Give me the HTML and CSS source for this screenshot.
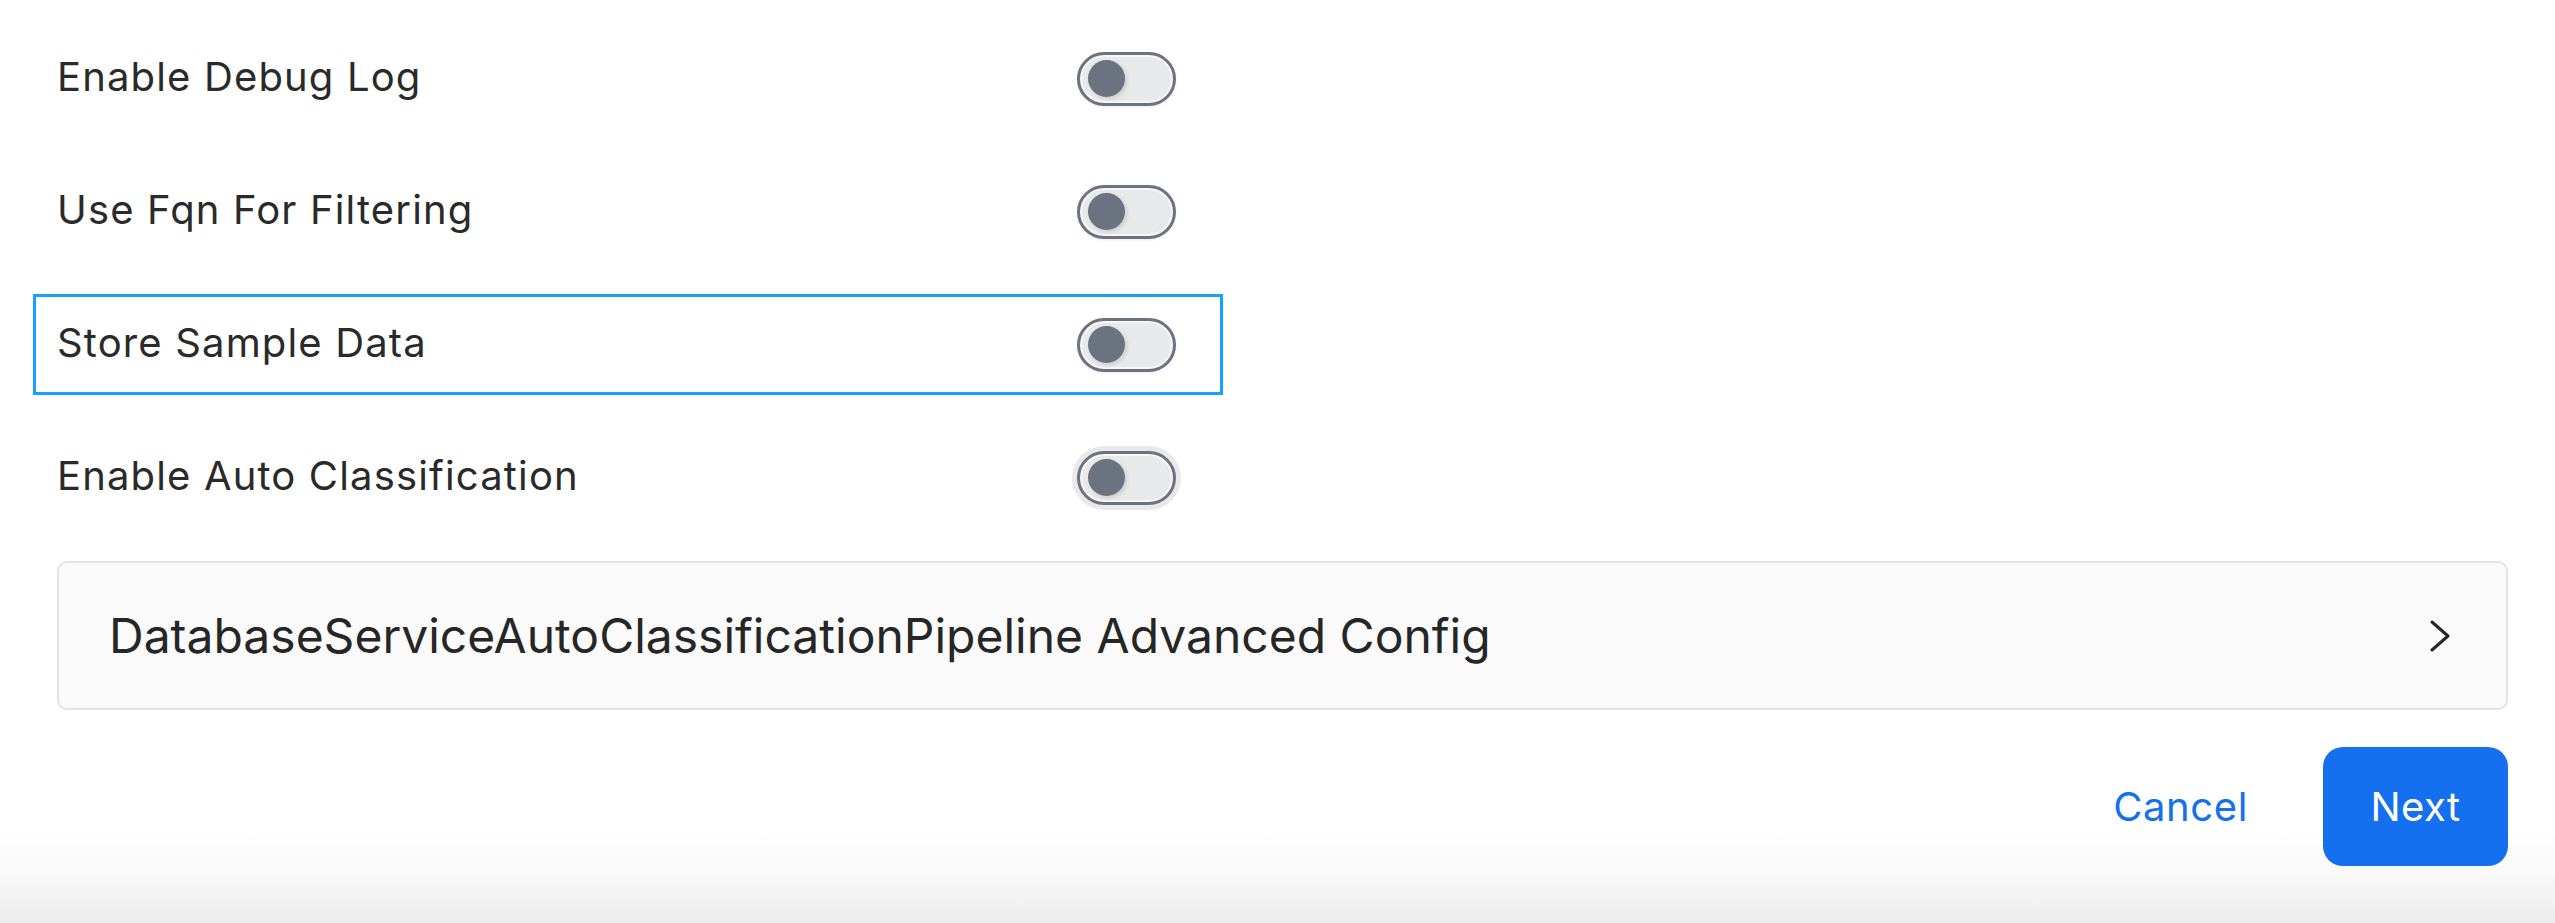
FILE: index.html
```html
<!DOCTYPE html>
<html lang="en">
<head>
<meta charset="utf-8">
<title>Auto Classification Settings</title>
<link rel="stylesheet" href="styles.css">
</head>
<body>
<main class="form">
  <div class="row">
    <span class="label">Enable Debug Log</span>
    <span class="switch"><span class="knob"></span></span>
  </div>
  <div class="row">
    <span class="label">Use Fqn For Filtering</span>
    <span class="switch"><span class="knob"></span></span>
  </div>
  <div class="row row-active">
    <span class="label">Store Sample Data</span>
    <span class="switch"><span class="knob"></span></span>
  </div>
  <div class="row">
    <span class="label">Enable Auto Classification</span>
    <span class="switch switch-focus"><span class="knob"></span></span>
  </div>
  <div class="panel">
    <span class="panel-title">DatabaseServiceAutoClassificationPipeline Advanced Config</span>
    <svg class="chevron" width="22" height="32" viewBox="0 0 22 32" aria-hidden="true">
      <path d="M3 2 L19 16 L3 30" fill="none" stroke="#262626" stroke-width="3" stroke-linecap="round" stroke-linejoin="round"/>
    </svg>
  </div>
  <div class="actions">
    <button class="btn btn-link" type="button">Cancel</button>
    <button class="btn btn-primary" type="button">Next</button>
  </div>
</main>
</body>
</html>
```

FILE: styles.css
```css
html, body {
  margin: 0;
  padding: 0;
}
body {
  width: 2555px;
  height: 923px;
  overflow: hidden;
  font-family: Inter, "Noto Sans", "Liberation Sans", sans-serif;
  color: #2a2a2a;
  background: linear-gradient(to bottom, #ffffff 0, #ffffff 830px, #fafafa 865px, #ededed 923px);
}
.form {
  padding: 28px 47px 0 33px;
  display: flex;
  flex-direction: column;
}
.row {
  box-sizing: border-box;
  width: 1190px;
  height: 101px;
  border: 3px solid transparent;
  display: flex;
  align-items: center;
  margin-bottom: 32px;
}
.row-active {
  border-color: #13a2ff;
}
.label {
  width: 1041px;
  padding-left: 21px;
  box-sizing: border-box;
  font-size: 40px;
  line-height: 48px;
  letter-spacing: 1.15px;
  position: relative;
  top: -2px;
}
.switch {
  box-sizing: border-box;
  width: 99px;
  height: 54px;
  border-radius: 27px;
  border: 3px solid #6b7280;
  background: #e8e9eb;
  box-shadow: inset 0 0 0 2px #f6f6f7, 0 1px 3px rgba(0,0,0,0.08);
  display: flex;
  align-items: center;
  padding-left: 8px;
}
.switch-focus {
  box-shadow: inset 0 0 0 2px #f6f6f7, 0 0 0 5px #e9e9ea;
}
.knob {
  width: 37px;
  height: 37px;
  border-radius: 50%;
  background: #6b7280;
  box-shadow: 2px 2px 4px rgba(0,0,0,0.12);
}
.panel {
  margin-top: 1px;
  margin-left: 24px;
  box-sizing: border-box;
  width: 2451px;
  height: 149px;
  background: #fafafa;
  border: 2px solid #e3e3e3;
  border-radius: 10px;
  display: flex;
  align-items: center;
  justify-content: space-between;
  padding: 0 55px 0 50px;
}
.panel-title {
  font-size: 48px;
  line-height: 56px;
  color: #262626;
}
.chevron {
  display: block;
}
.actions {
  margin-top: 37px;
  display: flex;
  justify-content: flex-end;
  align-items: center;
  width: 2475px;
  gap: 36px;
}
.btn {
  font-family: Inter, "Noto Sans", "Liberation Sans", sans-serif;
  font-size: 40px;
  border: none;
  cursor: pointer;
}
.btn-link {
  background: transparent;
  color: #1570ef;
  padding: 0 39px;
  height: 119px;
  letter-spacing: 0.6px;
}
.btn-primary {
  background: #1570ef;
  color: #ffffff;
  height: 119px;
  width: 185px;
  border-radius: 20px;
  padding: 0;
  letter-spacing: 0.4px;
}
```
